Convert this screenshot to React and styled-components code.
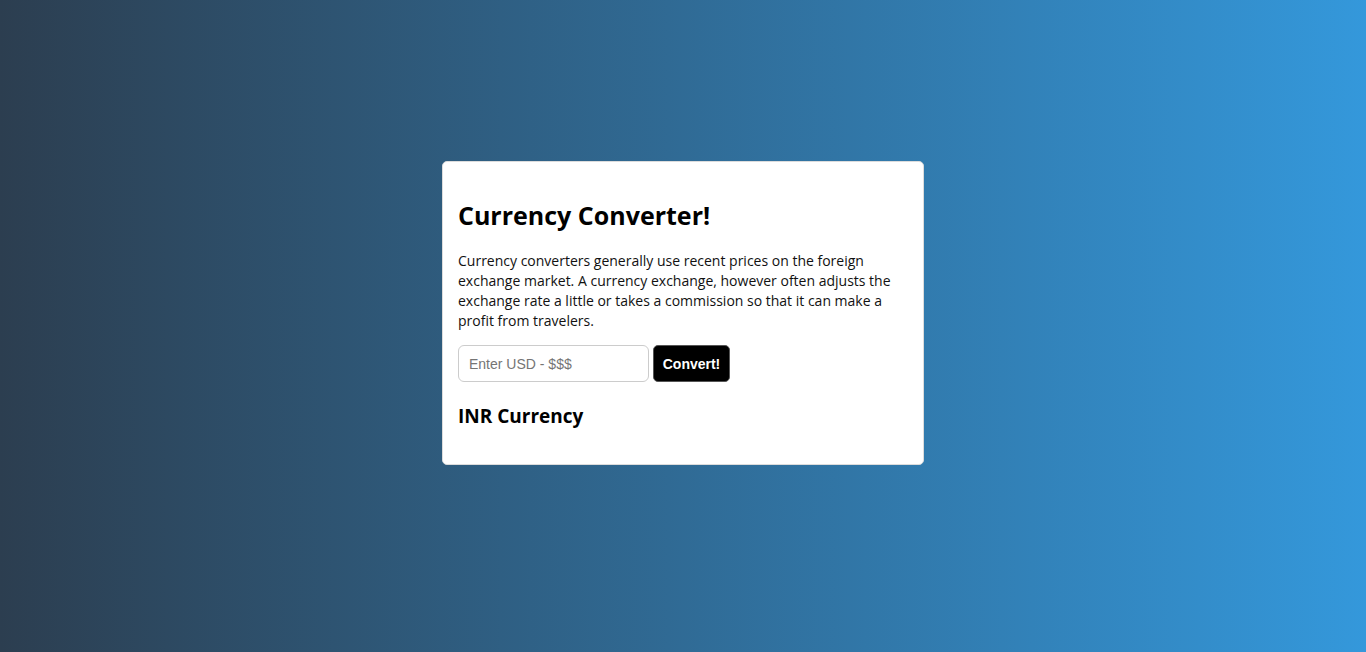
import React, { useState } from "react";
import styled, { createGlobalStyle } from "styled-components";

const GlobalStyle = createGlobalStyle`
  html, body {
    margin: 0;
    padding: 0;
  }
  body {
    font-family: "Open Sans", "Liberation Sans", sans-serif;
    background: linear-gradient(to right, #2c3e50, #3498db);
    min-height: 652px;
  }
`;

const Page = styled.div`
  min-height: 652px;
  display: flex;
  justify-content: center;
  padding-top: 161px;
  box-sizing: border-box;
`;

const Card = styled.div`
  width: 482px;
  height: 304px;
  box-sizing: border-box;
  background: #fff;
  border: 1px solid #dcdcdc;
  border-radius: 5px;
  padding: 35px 15px 15px;
`;

const Title = styled.h1`
  margin: 0 0 18px;
  font-size: 25px;
  line-height: 36px;
  font-weight: 700;
  color: #000;
`;

const Text = styled.p`
  margin: 0 0 14px;
  font-size: 14px;
  line-height: 20px;
  color: #111;
`;

const Row = styled.form`
  display: flex;
  gap: 4px;
  align-items: stretch;
`;

const Input = styled.input`
  width: 191px;
  height: 37px;
  box-sizing: border-box;
  border: 1px solid #ccc;
  border-radius: 6px;
  padding: 0 10px;
  font-family: "Liberation Sans", Arial, sans-serif;
  font-size: 14px;
  outline: none;
  &::placeholder {
    color: #757575;
  }
`;

const Button = styled.button`
  width: 77px;
  height: 37px;
  border: 1px solid #555;
  border-radius: 5px;
  background: #000;
  color: #fff;
  font-family: "Liberation Sans", Arial, sans-serif;
  font-weight: 700;
  font-size: 14px;
  cursor: pointer;
`;

const Result = styled.h3`
  margin: 19px 0 0;
  font-size: 19px;
  line-height: 30px;
  font-weight: 700;
  color: #000;
`;

export default function App() {
  const [usd, setUsd] = useState("");
  return (
    <>
      <GlobalStyle />
      <Page>
        <Card>
          <Title>Currency Converter!</Title>
          <Text>
            Currency converters generally use recent prices on the foreign
            exchange market. A currency exchange, however often adjusts the
            exchange rate a little or takes a commission so that it can make a
            profit from travelers.
          </Text>
          <Row onSubmit={(e) => e.preventDefault()}>
            <Input
              placeholder="Enter USD - $$$"
              value={usd}
              onChange={(e) => setUsd(e.target.value)}
            />
            <Button type="submit">Convert!</Button>
          </Row>
          <Result>INR Currency</Result>
        </Card>
      </Page>
    </>
  );
}
